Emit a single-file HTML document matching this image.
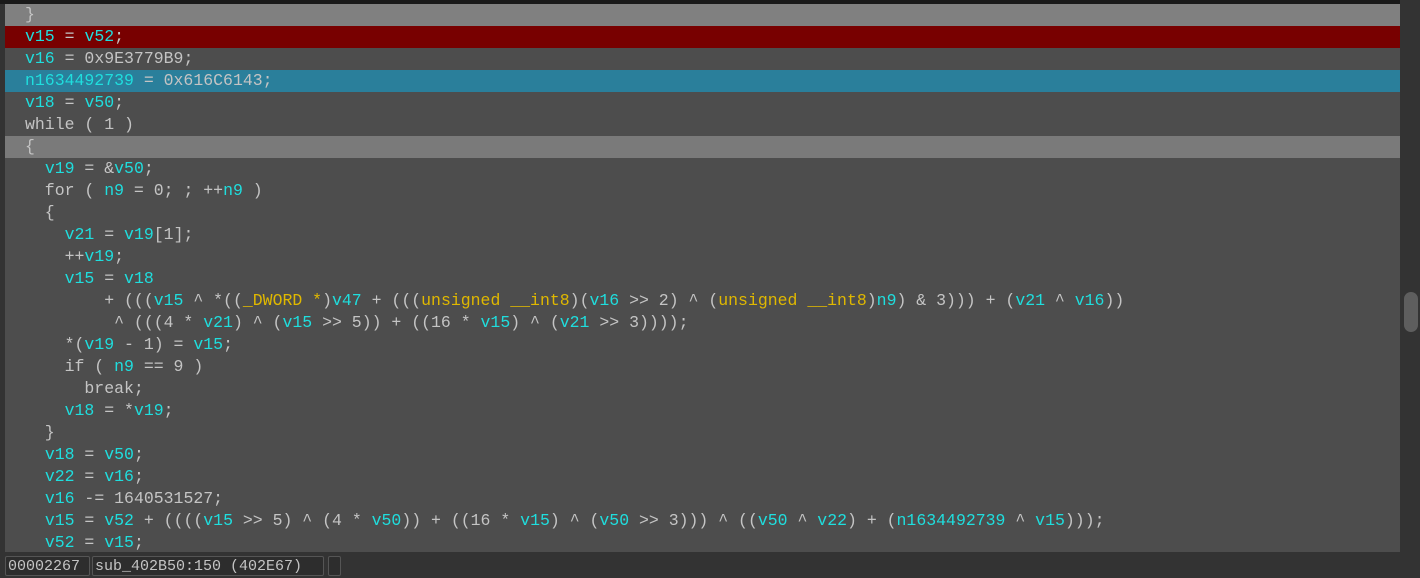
<!DOCTYPE html>
<html><head><meta charset="utf-8"><style>
html,body{margin:0;padding:0;width:1420px;height:578px;overflow:hidden;background:#333;}
#top{position:absolute;left:0;top:0;width:1420px;height:4px;background:#1a1a1a;}
#code{position:absolute;left:5px;top:4px;width:1395px;height:548px;background:#4d4d4d;overflow:hidden;}
.r{position:absolute;left:0;width:1395px;height:22px;line-height:22px;white-space:pre;font-family:"Liberation Mono",monospace;font-size:16.5px;color:#c4c4c4;padding-left:20px;box-sizing:border-box;}
.v{color:#1fdede;}
.t{color:#e0b800;}
#sb{position:absolute;left:1400px;top:0;width:20px;height:552px;background:#333;}
#th{position:absolute;left:1404px;top:292px;width:14px;height:40px;border-radius:7px;background:#5e5e5e;}
#status{position:absolute;left:0;top:552px;width:1420px;height:26px;background:#333;}
.b{position:absolute;top:4px;height:20px;line-height:20px;border:1px solid #555;background:#2d2d2d;color:#c4c4c4;font-family:"Liberation Mono",monospace;font-size:15px;box-sizing:border-box;padding-left:2px;border-radius:2px;}
</style></head><body>
<div id="top"></div>
<div id="code">
<div class="r" style="top:0;background:#808080">}</div>
<div class="r" style="top:22px;background:#780000"><span class="v">v15</span> = <span class="v">v52</span>;</div>
<div class="r" style="top:44px"><span class="v">v16</span> = 0x9E3779B9;</div>
<div class="r" style="top:66px;background:#2a7f9b"><span class="v">n1634492739</span> = 0x616C6143;</div>
<div class="r" style="top:88px"><span class="v">v18</span> = <span class="v">v50</span>;</div>
<div class="r" style="top:110px">while ( 1 )</div>
<div class="r" style="top:132px;background:#7a7a7a">{</div>
<div class="r" style="top:154px">  <span class="v">v19</span> = &amp;<span class="v">v50</span>;</div>
<div class="r" style="top:176px">  for ( <span class="v">n9</span> = 0; ; ++<span class="v">n9</span> )</div>
<div class="r" style="top:198px">  {</div>
<div class="r" style="top:220px">    <span class="v">v21</span> = <span class="v">v19</span>[1];</div>
<div class="r" style="top:242px">    ++<span class="v">v19</span>;</div>
<div class="r" style="top:264px">    <span class="v">v15</span> = <span class="v">v18</span></div>
<div class="r" style="top:286px">        + (((<span class="v">v15</span> ^ *((<span class="t">_DWORD *</span>)<span class="v">v47</span> + (((<span class="t">unsigned __int8</span>)(<span class="v">v16</span> &gt;&gt; 2) ^ (<span class="t">unsigned __int8</span>)<span class="v">n9</span>) &amp; 3))) + (<span class="v">v21</span> ^ <span class="v">v16</span>))</div>
<div class="r" style="top:308px">         ^ (((4 * <span class="v">v21</span>) ^ (<span class="v">v15</span> &gt;&gt; 5)) + ((16 * <span class="v">v15</span>) ^ (<span class="v">v21</span> &gt;&gt; 3))));</div>
<div class="r" style="top:330px">    *(<span class="v">v19</span> - 1) = <span class="v">v15</span>;</div>
<div class="r" style="top:352px">    if ( <span class="v">n9</span> == 9 )</div>
<div class="r" style="top:374px">      break;</div>
<div class="r" style="top:396px">    <span class="v">v18</span> = *<span class="v">v19</span>;</div>
<div class="r" style="top:418px">  }</div>
<div class="r" style="top:440px">  <span class="v">v18</span> = <span class="v">v50</span>;</div>
<div class="r" style="top:462px">  <span class="v">v22</span> = <span class="v">v16</span>;</div>
<div class="r" style="top:484px">  <span class="v">v16</span> -= 1640531527;</div>
<div class="r" style="top:506px">  <span class="v">v15</span> = <span class="v">v52</span> + ((((<span class="v">v15</span> &gt;&gt; 5) ^ (4 * <span class="v">v50</span>)) + ((16 * <span class="v">v15</span>) ^ (<span class="v">v50</span> &gt;&gt; 3))) ^ ((<span class="v">v50</span> ^ <span class="v">v22</span>) + (<span class="v">n1634492739</span> ^ <span class="v">v15</span>)));</div>
<div class="r" style="top:528px">  <span class="v">v52</span> = <span class="v">v15</span>;</div>
</div>
<div id="sb"></div><div id="th"></div>
<div id="status">
<div class="b" style="left:5px;width:85px">00002267</div>
<div class="b" style="left:92px;width:232px">sub_402B50:150 (402E67)</div>
<div class="b" style="left:328px;width:13px"></div>
</div>
</body></html>
